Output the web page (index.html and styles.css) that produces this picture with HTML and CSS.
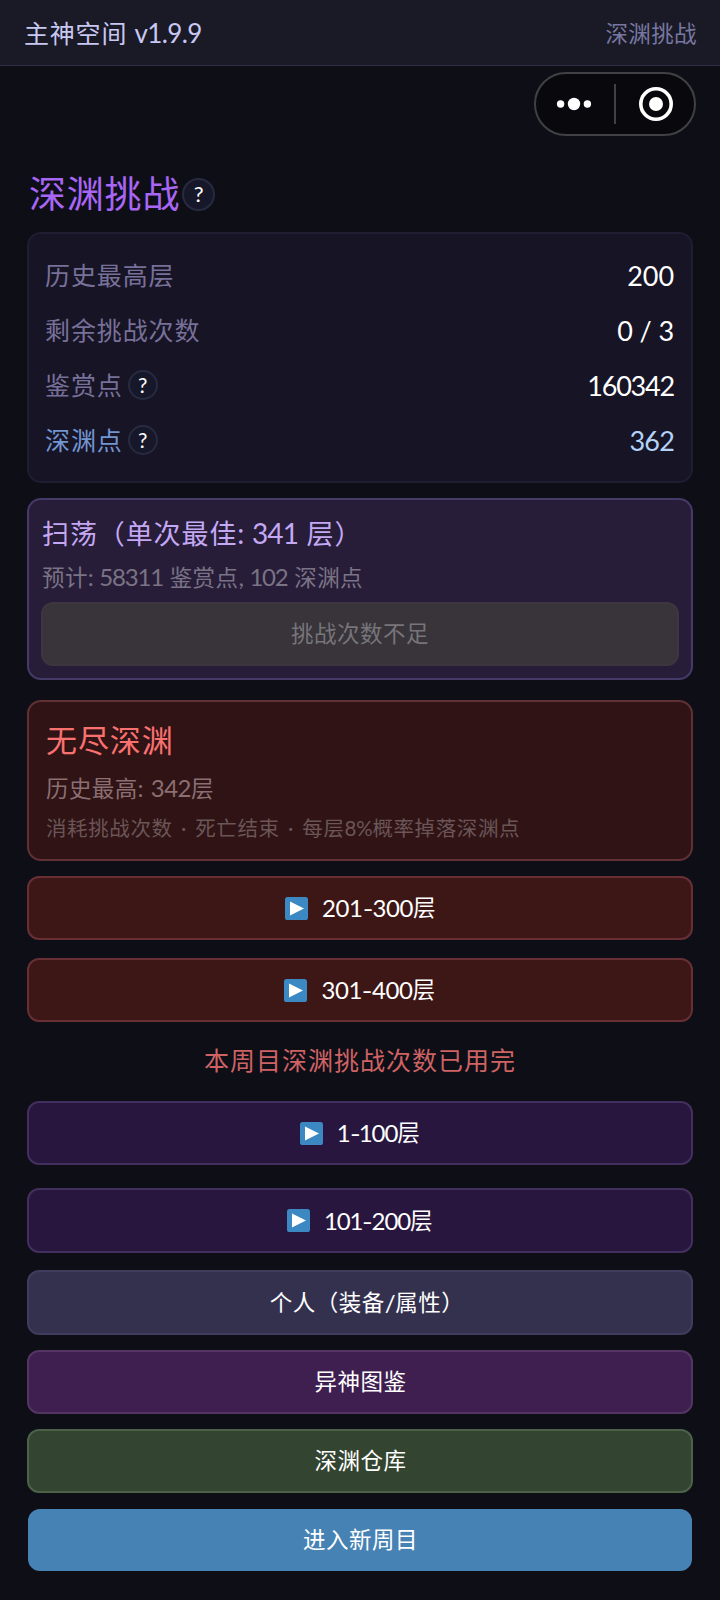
FILE: index.html
```html
<!DOCTYPE html>
<html lang="zh-CN">
<head>
<meta charset="utf-8">
<title>主神空间</title>
<link rel="stylesheet" href="styles.css">
</head>
<body>
<header class="topbar">
  <div class="app-name">主神空间 <span class="version">v1.9.9</span></div>
  <div class="page-name">深渊挑战</div>
</header>
<div class="capsule">
  <svg width="162" height="64" viewBox="0 0 162 64">
    <rect x="1" y="1" width="160" height="62" rx="31" fill="#08080d" stroke="#414145" stroke-width="2"/>
    <g fill="#fff"><circle cx="26.6" cy="32" r="3.7"/><circle cx="40" cy="32" r="6.2"/><circle cx="53.4" cy="32" r="3.7"/><circle cx="122" cy="32" r="7"/></g>
    <path d="M81 12v40" stroke="#414145" stroke-width="2"/>
    <circle cx="122" cy="32" r="15.2" fill="none" stroke="#fff" stroke-width="3.6"/>
  </svg>
</div>
<main class="content">
  <h1 class="title">深渊挑战<span class="help help-lg">?</span></h1>
  <section class="card stats">
    <div class="row"><span class="label">历史最高层</span><span class="value">200</span></div>
    <div class="row"><span class="label">剩余挑战次数</span><span class="value">0 / 3</span></div>
    <div class="row"><span class="label">鉴赏点<span class="help">?</span></span><span class="value tight">160342</span></div>
    <div class="row blue"><span class="label">深渊点<span class="help">?</span></span><span class="value">362</span></div>
  </section>
  <section class="card sweep">
    <h2 class="sweep-title">扫荡（单次最佳<span class="num">: 341 </span>层）</h2>
    <p class="sweep-info">预计<span class="num">: 58311 </span>鉴赏点<span class="num">, 102 </span>深渊点</p>
    <button class="btn disabled">挑战次数不足</button>
  </section>
  <section class="card endless">
    <h2 class="endless-title">无尽深渊</h2>
    <p class="endless-best">历史最高<span class="num">: 342</span>层</p>
    <p class="endless-rule">消耗挑战次数<span class="dot"> · </span>死亡结束<span class="dot"> · </span>每层<span class="pct">8%</span>概率掉落深渊点</p>
  </section>
  <button class="btn red b1"><svg class="play" viewBox="0 0 23 23"><rect width="23" height="23" rx="2.6"/><path d="M5 4.5l14 7-14 7z"/></svg><span class="num">201<span class="dash">-</span>300</span>层</button>
  <button class="btn red b2"><svg class="play" viewBox="0 0 23 23"><rect width="23" height="23" rx="2.6"/><path d="M5 4.5l14 7-14 7z"/></svg><span class="num">301<span class="dash">-</span>400</span>层</button>
  <p class="notice">本周目深渊挑战次数已用完</p>
  <button class="btn violet b3"><svg class="play" viewBox="0 0 23 23"><rect width="23" height="23" rx="2.6"/><path d="M5 4.5l14 7-14 7z"/></svg><span class="num">1<span class="dash">-</span>100</span>层</button>
  <button class="btn violet b4"><svg class="play" viewBox="0 0 23 23"><rect width="23" height="23" rx="2.6"/><path d="M5 4.5l14 7-14 7z"/></svg><span class="num">101<span class="dash">-</span>200</span>层</button>
  <button class="btn slate b5">个人（装备<span class="num">/</span>属性）</button>
  <button class="btn purple b6">异神图鉴</button>
  <button class="btn green b7">深渊仓库</button>
  <button class="btn primary b8">进入新周目</button>
</main>
</body>
</html>
```
FILE: styles.css
```css
* { box-sizing: border-box; margin: 0; padding: 0; }
html, body { height: 1600px; overflow: hidden; }
body {
  background: #0e0e17;
  color: #fff;
  font-family: Lato, "Noto Sans CJK SC", sans-serif;
  font-weight: 400;
}
h1, h2 { font-weight: 400; }
p, h1, h2, span { white-space: pre; }

.topbar {
  height: 66px;
  padding: 0 23px 2px 24px;
  display: flex;
  align-items: center;
  justify-content: space-between;
  background: #1a1a27;
  border-bottom: 1px solid #2d2d44;
}
.app-name { color: #c8c8f2; font-size: 25px; letter-spacing: .8px; }
.version { font-size: 26px; letter-spacing: -.6px; }
.page-name { color: #7777a0; font-size: 22.5px; letter-spacing: .4px; }

.capsule { position: absolute; left: 534px; top: 72px; }
.capsule svg { display: block; }

.content {
  display: flex;
  flex-direction: column;
  padding: 103px 27px 0;
}
.title {
  height: 50px;
  margin: 0 0 13px 2px;
  display: flex;
  align-items: center;
  color: #a866f5;
  font-size: 37px;
  line-height: 50px;
  letter-spacing: .8px;
}
.help {
  display: flex;
  align-items: center;
  justify-content: center;
  width: 30px;
  height: 30px;
  margin-left: 5px;
  border: 2px solid #272a40;
  border-radius: 50%;
  background: #16182a;
  color: #fff;
  font-size: 21px;
  line-height: 26px;
  letter-spacing: 0;
}
.help-lg { width: 33px; height: 33px; margin-left: 2px; font-size: 22px; }

.card { border: 2px solid; border-radius: 14px; }
.stats { height: 251px; padding: 13px 17px 0 16px; background: #171425; border-color: #201c31; }
.row { height: 55px; display: flex; align-items: center; justify-content: space-between; font-size: 25px; line-height: 36px; }
.label { display: flex; align-items: center; color: #77719a; letter-spacing: .9px; }
.value { position: relative; top: 1px; font-size: 27px; letter-spacing: -.1px; }
.tight { letter-spacing: -1.2px; }
.blue .label { color: #7396d2; }
.blue .value { color: #b4d2f8; letter-spacing: -.8px; }

.sweep { height: 182px; margin-top: 15px; padding: 13px 12px 0 13px; background: #271d38; border-color: #453a68; }
.sweep-title { color: #c4a8f4; font-size: 27px; line-height: 40px; letter-spacing: .9px; }
.sweep-title .num { font-size: 28px; letter-spacing: -.8px; word-spacing: 2px; }
.sweep-info { margin-top: 3px; color: #7a7385; font-size: 22.5px; line-height: 40px; letter-spacing: .4px; }
.sweep-info .num { font-size: 24px; letter-spacing: -1.2px; word-spacing: 1.8px; }

.endless { height: 161px; margin-top: 20px; padding: 15px 17px 0; background: #2f1315; border-color: #613034; }
.endless-title { color: #f9716f; font-size: 31px; line-height: 46px; letter-spacing: .9px; }
.endless-best { margin-top: 7px; color: #8c6f72; font-size: 22.5px; line-height: 36px; letter-spacing: .4px; }
.endless-best .num { font-size: 24px; letter-spacing: -.5px; word-spacing: 2px; }
.endless-rule { margin-top: 4px; color: #6b5557; font-size: 20.5px; line-height: 34px; letter-spacing: .6px; }
.dot { word-spacing: 2.5px; }
.pct { letter-spacing: -.2px; }

.btn {
  display: flex;
  align-items: center;
  justify-content: center;
  width: 100%;
  height: 64px;
  border: 2px solid;
  border-radius: 12px;
  color: #fff;
  font: 400 22.5px/36px Lato, "Noto Sans CJK SC", sans-serif;
  letter-spacing: .5px;
}
.btn .num { font-size: 24px; letter-spacing: -.4px; }
.play { width: 23px; height: 23px; margin-right: 14px; }
.play rect { fill: #3b88c3; }
.play path { fill: #fff; }
.dash { display: inline-block; transform: scaleX(1.2); padding: 0 .7px; }
.disabled { width: 638px; margin: 4px 0 0 -1px; background: #38343a; border-color: #3d353f; color: #77747a; }
.red { background: #3d1616; border-color: #683034; }
.violet { background: #28163e; border-color: #432f5d; }
.slate { background: #34314f; border-color: #413c5d; }
.purple { background: #3f1e50; border-color: #533463; }
.green { background: #334530; border-color: #4b6148; }
.primary { background: #4682b4; border-color: #4682b4; }

.b1 { margin-top: 15px; }
.b2 { margin-top: 18px; }
.b1 { padding-left: 1px; }
.notice { height: 40px; margin-top: 18px; color: #cf6364; font-size: 25px; line-height: 40px; letter-spacing: 1px; text-align: center; }
.b3 { margin-top: 21px; }
.b3 .num, .b4 .num { letter-spacing: -1.1px; }
.b4 { margin-top: 23px; height: 65px; }
.b5 { margin-top: 17px; height: 65px; padding-left: 14px; }
.b6 { margin-top: 15px; }
.b7 { margin-top: 15px; }
.b6, .b7, .b8 { padding-left: 1px; }
.b8 { width: 664px; height: 62px; margin: 16px 1px 0; }
```
